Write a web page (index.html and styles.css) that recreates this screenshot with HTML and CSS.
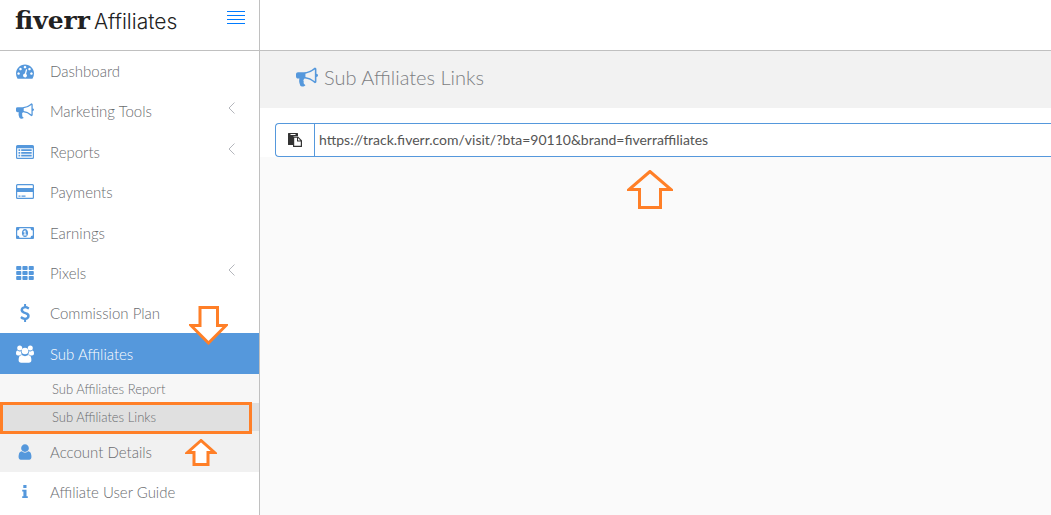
FILE: index.html
```
<!DOCTYPE html>
<html lang="en">
<head>
    <meta charset="UTF-8">
    <meta name="viewport" content="width=device-width, initial-scale=1.0">
    <title>Sub Affiliates Links</title>
    <link rel="stylesheet" href="styles.css">
</head>
<body>
    <div class="layout">
        <aside class="sidebar">
            <div class="brand">
                <a href="#" class="logo"><span class="logo-name">fiverr</span> <span class="logo-sub">Affiliates</span></a>
                <button type="button" class="menu-toggle" aria-label="Toggle menu">
                    <svg width="18" height="14" viewBox="0 0 18 14"><path d="M0 .5h18M0 4.5h18M0 8.5h18M0 12.5h18" stroke="currentColor"/></svg>
                </button>
            </div>
            <nav>
                <ul class="menu">
                    <li><a href="#">
                        <svg class="icon" viewBox="0 0 1792 1792"><path d="M384 1152q0-53-37.5-90.5t-90.5-37.5-90.5 37.5-37.5 90.5 37.5 90.5 90.5 37.5 90.5-37.5 37.5-90.5zm192-448q0-53-37.5-90.5t-90.5-37.5-90.5 37.5-37.5 90.5 37.5 90.5 90.5 37.5 90.5-37.5 37.5-90.5zm428 481l101-382q6-26-7.5-48.5t-38.5-29.5-48 6.5-30 39.5l-101 382q-60 5-107 43.5t-63 98.5q-20 77 20 146t117 89 146-20 89-117q16-60-6-117t-72-91zm660-33q0-53-37.5-90.5t-90.5-37.5-90.5 37.5-37.5 90.5 37.5 90.5 90.5 37.5 90.5-37.5 37.5-90.5zm-640-640q0-53-37.5-90.5t-90.5-37.5-90.5 37.5-37.5 90.5 37.5 90.5 90.5 37.5 90.5-37.5 37.5-90.5zm448 192q0-53-37.5-90.5t-90.5-37.5-90.5 37.5-37.5 90.5 37.5 90.5 90.5 37.5 90.5-37.5 37.5-90.5zm320 448q0 261-141 483-19 29-54 29h-1402q-35 0-54-29-141-221-141-483 0-182 71-348t191-286 286-191 348-71 348 71 286 191 191 286 71 348z"/></svg>
                        Dashboard</a></li>
                    <li><a href="#">
                        <svg class="icon" viewBox="0 0 1792 1792"><path d="M1664 640q53 0 90.5 37.5t37.5 90.5-37.5 90.5-90.5 37.5v384q0 52-38 90t-90 38q-417-347-812-380-58 19-91 66t-31 100.5 40 92.5q-20 33-23 65.5t6 58 33.5 55 48 50 61.5 50.5q-29 58-111.5 83t-168.5 11.5-132-55.5q-7-23-29.5-87.5t-32-94.5-23-89-15-101 3.5-98 22-110.5h-122q-66 0-113-47t-47-113v-192q0-66 47-113t113-47h480q435 0 896-384 52 0 90 38t38 90v384zm-128 604v-954q-394 302-768 343v270q377 42 768 341z"/></svg>
                        Marketing Tools
                        <svg class="chevron" viewBox="0 0 7 12"><path d="M6.500.5L1 6l5.500 5.500"/></svg></a></li>
                    <li><a href="#">
                        <svg class="icon" viewBox="0 0 18 18"><path fill-rule="evenodd" d="M1.500 2h15Q18 2 18 3.500v11q0 1.500-1.500 1.500h-15Q0 16 0 14.500v-11Q0 2 1.500 2zM1.200 5.200v9.100q0 .5.500.5h14.600q.5 0 .5-.5V5.200zM2.500 6.200h1.700v1.700H2.500zM5.200 6.200h10.500v1.700H5.200zM2.500 9h1.700v1.700H2.500zM5.200 9h10.500v1.700H5.200zM2.500 11.800h1.700v1.700H2.500zM5.200 11.800h10.500v1.700H5.200z"/></svg>
                        Reports
                        <svg class="chevron" viewBox="0 0 7 12"><path d="M6.500.5L1 6l5.500 5.500"/></svg></a></li>
                    <li><a href="#">
                        <svg class="icon" viewBox="0 0 18 18"><path fill-rule="evenodd" d="M1.500 1h15Q18 1 18 2.500v12q0 1.500-1.500 1.500h-15Q0 16 0 14.500v-12Q0 1 1.500 1zM1.200 2.700V5h15.600V2.700q0-.5-.5-.5H1.700q-.5 0-.5.5zM1.200 9v5.300q0 .5.500.5h14.600q.5 0 .5-.5V9zM2.500 12.400h2v1.400h-2zM5.500 12.400h4v1.400h-4z"/></svg>
                        Payments</a></li>
                    <li><a href="#">
                        <svg class="icon" viewBox="0 0 18 18"><path fill-rule="evenodd" d="M1 3h16q1 0 1 1v10q0 1-1 1H1q-1 0-1-1V4q0-1 1-1zM3.500 4.200Q3.500 6.500 1.200 6.500v5q2.300 0 2.300 2.300h11q0-2.300 2.300-2.300v-5q-2.300 0-2.300-2.300zM9 5c1.900 0 3.100 1.800 3.100 4S10.900 13 9 13s-3.100-1.800-3.100-4S7.100 5 9 5zM8.600 6.500L7.200 7.700l.6.7.6-.4v2.500h-1v1h3.200v-1h-1v-4z"/></svg>
                        Earnings</a></li>
                    <li><a href="#">
                        <svg class="icon" viewBox="0 0 18 18"><path d="M1 2h3.500q.8 0 .8.800v2.400q0 .8-.8.800H1q-.8 0-.8-.8V2.800Q.2 2 1 2zm6.200 0h3.600q.8 0 .8.800v2.400q0 .8-.8.800H7.200q-.8 0-.8-.8V2.800q0-.8.8-.8zm6.300 0H17q.8 0 .8.800v2.400q0 .8-.8.800h-3.500q-.8 0-.8-.8V2.800q0-.8.8-.8zM1 7h3.500q.8 0 .8.800v2.400q0 .8-.8.800H1q-.8 0-.8-.8V7.800Q.2 7 1 7zm6.200 0h3.600q.8 0 .8.800v2.400q0 .8-.8.800H7.200q-.8 0-.8-.8V7.800q0-.8.8-.8zm6.300 0H17q.8 0 .8.800v2.400q0 .8-.8.800h-3.500q-.8 0-.8-.8V7.800q0-.8.8-.8zM1 12h3.500q.8 0 .8.800v2.400q0 .8-.8.800H1q-.8 0-.8-.8v-2.400q0-.8.8-.8zm6.200 0h3.600q.8 0 .8.800v2.400q0 .8-.8.800H7.200q-.8 0-.8-.8v-2.400q0-.8.8-.8zm6.300 0H17q.8 0 .8.800v2.400q0 .8-.8.800h-3.500q-.8 0-.8-.8v-2.400q0-.8.8-.8z"/></svg>
                        Pixels
                        <svg class="chevron" viewBox="0 0 7 12"><path d="M6.500.5L1 6l5.500 5.500"/></svg></a></li>
                    <li><a href="#">
                        <svg class="icon" viewBox="0 0 1792 1792"><path d="M1362 1185q0 153-99.5 263.5t-258.5 136.5v175q0 14-9 23t-23 9h-135q-13 0-22.5-9.5t-9.5-22.5v-175q-66-9-127.5-31t-101.5-44.5-74-48-46.5-37.5-17.5-18q-17-21-2-41l103-135q7-10 23-12 15-2 24 9l2 2q113 99 243 125 37 8 74 8 81 0 142.5-43t61.5-122q0-28-15-53t-33.5-42-58.5-37.5-66-32-80-32.5q-39-16-61.5-25t-61.5-26.5-62.5-31-56.5-35.5-53.5-42.5-43.5-49-35.5-58-21-66.5-8.5-78q0-138 98-242t255-134v-180q0-13 9.500-22.500t22.500-9.500h135q14 0 23 9t9 23v176q57 6 110.500 23t87 33.500 63.500 37.500 39 29 15 14q17 18 5 38l-81 146q-8 15-23 16-14 3-27-7-3-3-14.500-12t-39-26.500-58.500-32-74.500-26-85.500-11.500q-95 0-155 43t-60 111q0 26 8.500 48t29.500 41.500 39.500 33 56 31 60.500 27 70 27.500q53 20 81 31.500t76 35 75.500 42.500 62 50 53 63.500 31.500 76.500 13 94z"/></svg>
                        Commission Plan</a></li>
                    <li class="active"><a href="#">
                        <svg class="icon" viewBox="0 0 18 18"><circle cx="3.700" cy="3" r="2.500"/><circle cx="14.300" cy="3" r="2.500"/><path d="M1.600 5.600q2 1.600 3.600.4Q4.600 8.500 6 9.400 4.300 9.500 3.500 10.500H2Q0 10.500 0 8.800 0 5.600 1.600 5.600zM16.400 5.600q-2 1.600-3.600.4.600 2.500-.8 3.400 1.700.1 2.500 1.100H16q2 0 2-1.700 0-3.200-1.600-3.200z"/><circle cx="9" cy="6" r="3.300"/><path d="M5.800 10q3.200 2.300 6.400 0 3.200.2 3.200 5 0 2.800-2.600 2.800H5.200Q2.600 17.800 2.600 15q0-4.800 3.200-5z"/></svg>
                        Sub Affiliates</a>
                        <svg class="arrow arrow-menu" width="39" height="39" viewBox="0 0 39 39"><path d="M11 1.500h17.500v18H37L19.500 37 2 19.500h9z"/></svg>
                        <ul class="submenu">
                            <li><a href="#">Sub Affiliates Report</a></li>
                            <li class="current"><a href="#">Sub Affiliates Links</a></li>
                        </ul>
                    </li>
                    <li class="hover"><a href="#">
                        <svg class="icon" viewBox="0 0 1792 1792"><path d="M1536 1399q0 109-62.5 187t-150.5 78h-854q-88 0-150.5-78t-62.5-187q0-85 8.5-160.5t31.5-152 58.5-131 94-89 134.5-34.5q131 128 313 128t313-128q76 0 134.5 34.5t94 89 58.5 131 31.5 152 8.5 160.5zm-256-887q0 159-112.5 271.5t-271.5 112.5-271.5-112.5-112.5-271.5 112.5-271.5 271.5-112.5 271.5 112.5 112.5 271.5z"/></svg>
                        Account Details</a>
                        <svg class="arrow arrow-link" width="32" height="28" viewBox="0 0 32 28"><path d="M16 1.500L2.500 13.500H9v12h14v-12h6.500z"/></svg>
                    </li>
                    <li><a href="#">
                        <svg class="icon" viewBox="0 0 18 18"><path d="M7.300 2h3.200v3H7.300zM6.200 6.800h4.300v6.400h1.300V15H6.200v-1.800h1.200V8.600H6.200z"/></svg>
                        Affiliate User Guide</a></li>
                </ul>
            </nav>
        </aside>

        <main class="content">
            <div class="topbar"></div>
            <h1 class="page-title">
                <svg class="title-icon" viewBox="0 0 1792 1792"><path d="M1664 640q53 0 90.5 37.5t37.5 90.5-37.5 90.5-90.5 37.5v384q0 52-38 90t-90 38q-417-347-812-380-58 19-91 66t-31 100.5 40 92.5q-20 33-23 65.5t6 58 33.5 55 48 50 61.5 50.5q-29 58-111.5 83t-168.5 11.5-132-55.5q-7-23-29.5-87.5t-32-94.5-23-89-15-101 3.5-98 22-110.5h-122q-66 0-113-47t-47-113v-192q0-66 47-113t113-47h480q435 0 896-384 52 0 90 38t38 90v384zm-128 604v-954q-394 302-768 343v270q377 42 768 341z"/></svg>
                Sub Affiliates Links
            </h1>
            <div class="link-panel">
                <div class="link-group">
                    <button type="button" class="copy-button" aria-label="Copy link">
                        <svg width="14" height="14" viewBox="0 0 14 14"><path d="M.6 0h8.800q.6 0 .6.600V3H6.500Q5 3 5 4.500V12H.6Q0 12 0 11.400V.6Q0 0 .6 0z"/><path class="paper" d="M2.500 1h5v1h-5z"/><path fill-rule="evenodd" d="M5.600 3.500H10l4 4v5.900q0 .6-.6.600H5.600q-.6 0-.6-.6V4.100q0-.6.600-.6zM6.200 4.700v8.100h6.600V8.500H9.600Q9 8.500 9 7.900V4.700zM10 5v2.500h2.500z"/></svg>
                    </button>
                    <input type="text" class="link-input" aria-label="Sub affiliates link" value="https://track.fiverr.com/visit/?bta=90110&amp;brand=fiverraffiliates" readonly>
                </div>
                <svg class="arrow arrow-url" width="46" height="40" viewBox="0 0 46 40"><path d="M23 1.500L2 19.500h10.500v18h21v-18H44z"/></svg>
            </div>
        </main>
    </div>
</body>
</html>
```
FILE: styles.css
```
* {
    box-sizing: border-box;
}
body {
    margin: 0;
    font-family: Lato, "Liberation Sans", sans-serif;
    font-size: 15px;
    font-weight: 300;
    color: #6a6c6f;
    background-color: #fafafa;
}
ul {
    list-style: none;
    margin: 0;
    padding: 0;
}
a {
    color: inherit;
    text-decoration: none;
}
button {
    padding: 0;
    border: none;
    background: none;
    cursor: pointer;
}
svg {
    display: block;
    flex: none;
}
.layout {
    display: flex;
    min-height: 100vh;
}

/* Sidebar */
.sidebar {
    width: 260px;
    flex: none;
    background-color: #fff;
    border-right: 1px solid #c0c0c0;
}
.brand {
    display: flex;
    justify-content: space-between;
    height: 51px;
    padding: 8px 14px 0 15px;
    border-bottom: 1px solid #c0c0c0;
}
.logo {
    display: flex;
    align-items: baseline;
    gap: 4px;
    height: 26px;
    line-height: 26px;
    color: #222;
}
.logo-name {
    font-family: "DejaVu Serif", serif;
    font-size: 25px;
    font-weight: bold;
}
.logo-sub {
    font-family: Inter, "Liberation Sans", sans-serif;
    font-size: 21px;
    font-weight: 300;
}
.menu-toggle {
    height: 20px;
    color: #007bff;
}
.menu > li {
    position: relative;
}
.menu > li:nth-child(3),
.menu > li:nth-child(5) {
    margin-top: 1px;
}
.menu > li > a {
    display: flex;
    align-items: center;
    height: 40px;
    padding: 0 24px 0 16px;
}
.icon {
    width: 18px;
    height: 18px;
    margin-right: 16px;
    fill: #5598dc;
}
.chevron {
    width: 7px;
    height: 12px;
    margin: 0 0 6px auto;
    fill: none;
    stroke: #b4b6bc;
}
.menu > .active > a {
    height: 41px;
    color: #fff;
    background-color: #5598dc;
}
.active .icon {
    fill: #fff;
}
.menu > .hover > a {
    height: 41px;
    background-color: #f1f1f1;
}
.submenu {
    padding-top: 1px;
    background-color: #f7f7f7;
    font-size: 13px;
}
.submenu a {
    display: block;
    padding-left: 52px;
    line-height: 28px;
}
.submenu .current {
    position: relative;
    background-color: #e0e0e0;
}
.submenu .current::after {
    content: "";
    position: absolute;
    z-index: 1;
    inset: -1px 7px -3px 0;
    border: 3px solid #ff7f27;
}

/* Pointer arrows */
.arrow {
    position: absolute;
    fill: #fff;
    stroke: #ff7f27;
    stroke-width: 3;
}
.arrow-menu {
    top: -27px;
    left: 189px;
}
.arrow-link {
    top: 8px;
    left: 185px;
}
.arrow-url {
    top: 62px;
    left: 367px;
    fill: #fafafa;
}

/* Content */
.content {
    flex: 1;
    min-width: 0;
}
.topbar {
    height: 51px;
    background-color: #fff;
    border-bottom: 1px solid #c0c0c0;
}
.page-title {
    display: flex;
    align-items: center;
    gap: 6px;
    height: 57px;
    margin: 0;
    padding: 0 36px 6px;
    background-color: #f2f2f2;
    font-size: 20px;
    font-weight: 300;
    color: #7c7e82;
}
.title-icon {
    width: 22px;
    height: 22px;
    fill: #5598dc;
}
.link-panel {
    position: relative;
    padding: 15px 0 0 15px;
    background-color: #fff;
}
.link-group {
    display: flex;
    height: 34px;
    border: 1px solid #5598dc;
    border-right: none;
    border-radius: 4px 0 0 4px;
}
.copy-button {
    display: flex;
    align-items: center;
    justify-content: center;
    width: 39px;
    border-right: 1px solid #5598dc;
    fill: #333;
}
.paper {
    fill: #fff;
}
.link-input {
    flex: 1;
    min-width: 0;
    padding: 0 4px 2px;
    border: none;
    outline: none;
    background: none;
    font-family: inherit;
    font-size: 14px;
    font-weight: 400;
    color: #555;
}
```
